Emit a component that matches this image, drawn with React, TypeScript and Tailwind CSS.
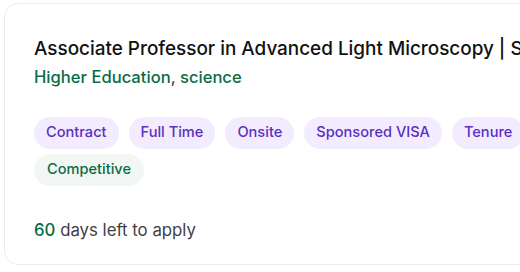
import React from "react";

const tags = ["Contract", "Full Time", "Onsite", "Sponsored VISA", "Tenure"];

export default function App() {
  return (
    <div className="w-[520px] h-[272px] overflow-hidden bg-white" style={{ fontFamily: "Inter, 'Noto Sans', sans-serif" }}>
      <div className="ml-[4px] mt-[3px] w-[640px] h-[262px] rounded-[14px] border border-[#ececec] bg-white pl-[29px] pt-[31px]">
        <div className="whitespace-nowrap text-[18.9px] leading-[28px] font-medium text-[#111111]">
          Associate Professor in Advanced Light Microscopy | Sainsbury Laboratory
        </div>
        <div className="mt-[2px] text-[16.6px] leading-[24px] font-medium text-[#0a6b47]">
          Higher Education<span className="text-[#444]">,</span> science
        </div>
        <div className="mt-[28px] flex flex-wrap gap-x-[10px] gap-y-[5px] w-[520px]">
          {tags.map((t) => (
            <span key={t} className="h-[32px] flex items-center px-[12px] rounded-full bg-[#f3ecfe] text-[#5b2ec4] text-[14.6px] font-medium whitespace-nowrap">
              {t}
            </span>
          ))}
        </div>
        <div className="mt-[5px] flex">
          <span className="h-[32px] flex items-center px-[13px] rounded-full bg-[#f2f7f4] text-[#0a6b47] text-[14.6px] font-medium">
            Competitive
          </span>
        </div>
        <div className="mt-[32px] text-[16.8px] leading-[24px] text-[#3f3f46]">
          <span className="text-[#0a6b47] font-medium">60</span> days left to apply
        </div>
      </div>
    </div>
  );
}
